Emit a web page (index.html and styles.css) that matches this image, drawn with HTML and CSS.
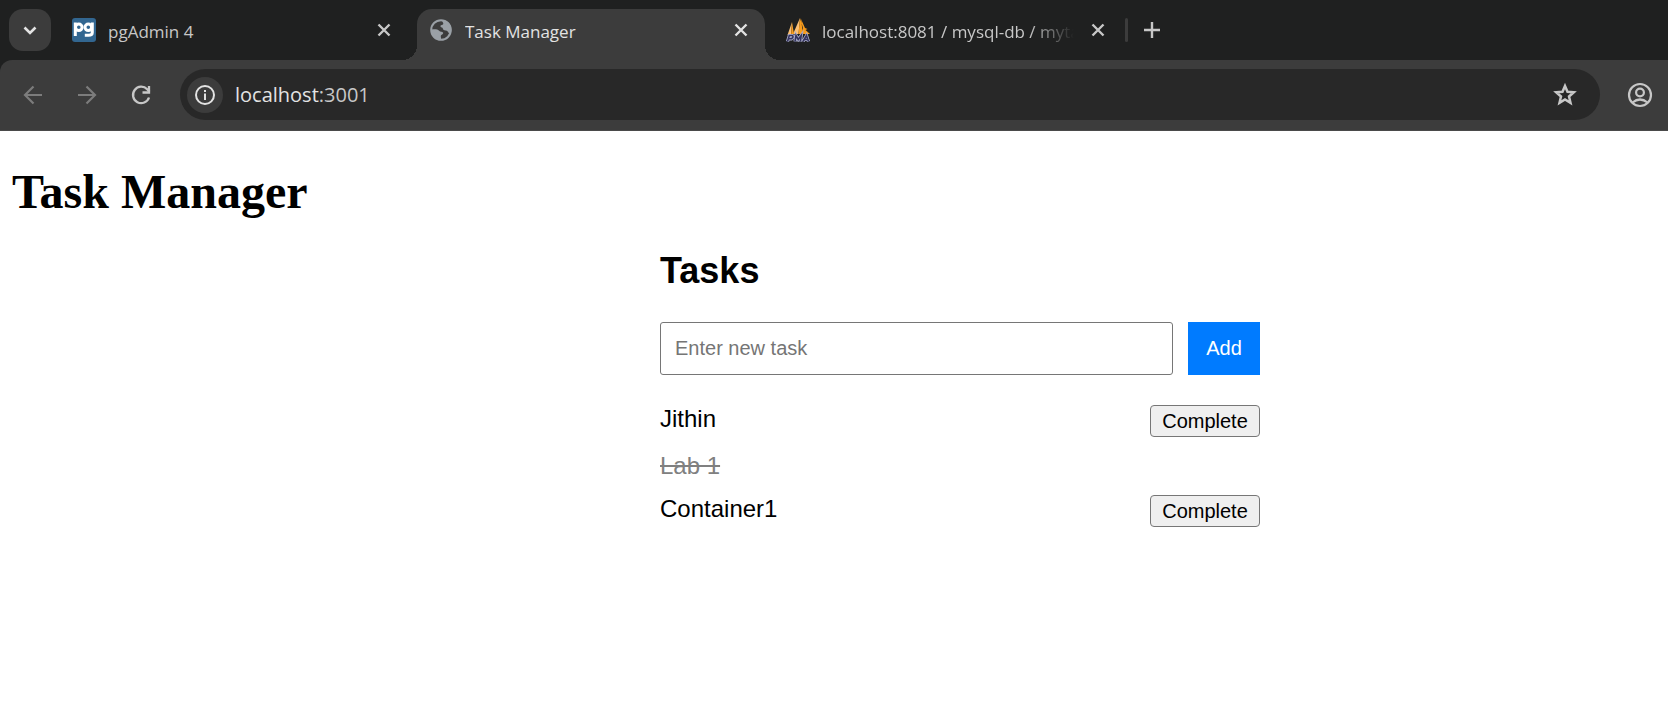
FILE: index.html
```html
<!DOCTYPE html>
<html lang="en">
<head>
<meta charset="utf-8">
<title>Task Manager</title>
<link rel="stylesheet" href="styles.css">
</head>
<body>
<header class="browser">
  <div class="tabstrip">
    <button class="tab-search" aria-label="Search tabs">
      <svg width="24" height="24" viewBox="0 0 24 24"><path d="M6.500 9.500l5.500 5.500L17.500 9.500" fill="none" stroke="currentColor" stroke-width="2.600"/></svg>
    </button>
    <div class="tab">
      <svg class="favicon" width="24" height="24" viewBox="0 0 24 24">
        <rect width="24" height="24" rx="3" fill="#326690"/>
        <g fill="none" stroke="#fff" stroke-width="3">
          <path d="M3.300 4.500v13.500"/><circle cx="6.800" cy="9.300" r="3.300"/>
          <circle cx="16.300" cy="9.300" r="3.300"/><path d="M20.300 4.500v10q0 2.800-3.800 2.800h-3.700"/>
        </g>
      </svg>
      <span class="tab-title">pgAdmin 4</span>
      <button class="close" aria-label="Close pgAdmin 4"><svg width="24" height="24" viewBox="0 0 24 24"><path d="M6.500 6.500l11 11M17.500 6.500l-11 11" stroke="currentColor" stroke-width="2.400"/></svg></button>
    </div>
    <div class="tab tab-active">
      <svg class="favicon" width="24" height="24" viewBox="0 0 24 24">
        <circle cx="12" cy="12" r="9.800" fill="#3c3c3c" stroke="#9aa0a6" stroke-width="2"/>
        <path d="M13.500 2c3.500.3 6.500 2.300 8 5.500 1 2.500 1 6 .2 8.200-1.700.1-2.300-1-3-2.200-.8-1.500-3.200-.4-4.300-1.700-.8-1-.2-2-1.700-2.300-1.300-.2-1.700-1.500-.7-2.200 1-.6 2.300-.2 2.300-1.800 0-1.300-1.500-1.700-.8-3.500zM2.300 11.500c3-.3 6.300-.5 7.800 1.300 1 1.300 3.500.4 4 2 .5 1.700-2 1.700-2.300 3.200-.1 1.300.6 2 .2 4C6 21.800 1.500 17.500 2.300 11.500z" fill="#9aa0a6"/>
      </svg>
      <span class="tab-title">Task Manager</span>
      <button class="close" aria-label="Close Task Manager"><svg width="24" height="24" viewBox="0 0 24 24"><path d="M6.500 6.500l11 11M17.500 6.500l-11 11" stroke="currentColor" stroke-width="2.400"/></svg></button>
    </div>
    <div class="tab">
      <svg class="favicon" width="24" height="24" viewBox="0 0 24 24">
        <path d="M6 4L1.500 17H5zM14 0L7 16h5.500z" fill="#fbc075"/>
        <path d="M6 4l-.8 12H8zM14 0l-1.500 16H16l1-6zM15 1l4 9 2.500 1-2 1 4.500 4h-7z" fill="#f89c1c"/>
        <g fill="none" stroke="#aeb0cf" stroke-width="3.200"><path d="M1.500 23.500l1.800-6h3q1.800 1.300-.8 3.300H3M9 23.500l1-6 2.200 4 3-4-.8 6M17 23.500l3.500-6 2 6M18 21.500h4"/></g>
        <g fill="none" stroke="#34345f" stroke-width="1.600"><path d="M1.500 23.500l1.800-6h3q1.800 1.300-.8 3.300H3M9 23.500l1-6 2.200 4 3-4-.8 6M17 23.500l3.500-6 2 6M18 21.500h4"/></g>
      </svg>
      <span class="tab-title tab-title-long">localhost:8081 / mysql-db / mytasks</span>
      <button class="close" aria-label="Close localhost:8081"><svg width="24" height="24" viewBox="0 0 24 24"><path d="M6.500 6.500l11 11M17.500 6.500l-11 11" stroke="currentColor" stroke-width="2.400"/></svg></button>
    </div>
    <span class="divider"></span>
    <button class="new-tab" aria-label="New tab"><svg width="24" height="24" viewBox="0 0 24 24"><path d="M12 4v16M4 12h16" stroke="currentColor" stroke-width="2.400"/></svg></button>
  </div>
  <div class="toolbar-wrap">
    <div class="toolbar">
      <button class="nav nav-off" aria-label="Back"><svg width="24" height="24" viewBox="0 0 24 24"><path d="M21 12H4.500M12.500 3.500L4 12l8.500 8.500" fill="none" stroke="currentColor" stroke-width="2.200"/></svg></button>
      <button class="nav nav-off" aria-label="Forward"><svg width="24" height="24" viewBox="0 0 24 24"><path d="M3 12h16.500M11.500 3.500L20 12l-8.500 8.500" fill="none" stroke="currentColor" stroke-width="2.200"/></svg></button>
      <button class="nav" aria-label="Reload"><svg width="24" height="24" viewBox="0 0 24 24"><path d="M20 14.500a8.200 8.200 0 1 1-1.800-8.200L20.500 8.700" fill="none" stroke="currentColor" stroke-width="2.300"/><path d="M20 3v6.500h-6.500" fill="none" stroke="currentColor" stroke-width="2.300"/></svg></button>
      <div class="address">
        <button class="site-info" aria-label="Site information"><svg width="22" height="22" viewBox="0 0 22 22"><circle cx="11" cy="11" r="9" fill="none" stroke="currentColor" stroke-width="2"/><path d="M11 9.500v6.500M11 6v2" stroke="currentColor" stroke-width="2"/></svg></button>
        <span class="url">localhost<span class="port">:3001</span></span>
        <button class="nav star" aria-label="Bookmark this tab"><svg width="26" height="26" viewBox="0 0 26 26"><path d="M13 4l2.500 5.800 6.300.5-4.800 4.200 1.500 6.300-5.500-3.300-5.500 3.300 1.500-6.300-4.800-4.200 6.300-.5z" fill="none" stroke="currentColor" stroke-width="2.500"/></svg></button>
      </div>
      <button class="nav profile" aria-label="Profile"><svg width="26" height="26" viewBox="0 0 26 26"><g fill="none" stroke="currentColor" stroke-width="2.200"><circle cx="13" cy="13" r="11"/><circle cx="13" cy="10.500" r="3.900"/><path d="M5.500 20.500q7.500-6 15 0"/></g></svg></button>
    </div>
  </div>
</header>
<main class="page">
  <h1 class="page-title">Task Manager</h1>
  <div class="tasks-area">
    <section class="tasks">
      <h2 class="tasks-title">Tasks</h2>
      <form class="task-form">
        <input class="task-input" type="text" placeholder="Enter new task" aria-label="New task">
        <button class="add" type="button">Add</button>
      </form>
      <ul class="task-list">
        <li class="task"><span>Jithin</span><button class="complete">Complete</button></li>
        <li class="task"><span class="done">Lab 1</span></li>
        <li class="task"><span>Container1</span><button class="complete">Complete</button></li>
      </ul>
    </section>
  </div>
</main>
</body>
</html>
```
FILE: styles.css
```css
* { box-sizing: border-box; }
body { margin: 0; background: #fff; color: #000; }
button { font: inherit; color: inherit; cursor: pointer; }
svg { display: block; flex: none; }

.browser {
  background: #1f2020;
  color: #c7c7c7;
  font-family: "Open Sans", "Noto Sans", sans-serif;
}
.browser button {
  display: flex;
  align-items: center;
  justify-content: center;
  flex: none;
  padding: 0;
  border: 0;
  background: none;
}
.tabstrip { display: flex; height: 60px; padding: 9px 9px 0; }
.browser .tab-search {
  width: 42px;
  height: 42px;
  margin-right: 9px;
  border-radius: 14px;
  background: #3c3c3c;
  color: #e3e3e3;
}
.tab {
  position: relative;
  display: flex;
  align-items: center;
  flex: 0 1 348px;
  min-width: 0;
  margin-right: 9px;
  padding: 0 12px 9px;
  font-size: 17px;
  line-height: 24px;
}
.tab:nth-of-type(3) { margin-right: 3px; }
.tab-active { background: #3c3c3c; color: #e3e3e3; border-radius: 15px 15px 0 0; }
.tab-active::before,
.tab-active::after {
  content: "";
  position: absolute;
  bottom: 0;
  width: 15px;
  height: 15px;
}
.tab-active::before { right: 100%; background: radial-gradient(circle at 0 0, transparent 15px, #3c3c3c 15px); }
.tab-active::after { left: 100%; background: radial-gradient(circle at 100% 0, transparent 15px, #3c3c3c 15px); }
.tab-title {
  flex: 1;
  min-width: 0;
  margin: 4px 12px 0;
  overflow: hidden;
  white-space: nowrap;
}
.tab-title-long { mask-image: linear-gradient(to right, #000 82%, transparent); }
.close { width: 24px; height: 24px; }
.divider { width: 3px; height: 24px; margin: 9px 11px 0 0; border-radius: 2px; background: #3c3c3c; }
.new-tab { width: 26px; height: 42px; }

.toolbar-wrap { background: #1f2020; }
.toolbar {
  display: flex;
  align-items: center;
  height: 71px;
  padding: 0 15px 1px 20px;
  border-bottom: 1px solid #4a4a4a;
  border-radius: 12px 0 0 0;
  background: #3c3c3c;
}
.nav { width: 26px; height: 42px; margin-right: 28px; }
.nav-off { color: #7c7c7c; }
.address {
  display: flex;
  align-items: center;
  flex: 1;
  height: 51px;
  margin: 0 27px 0 -2px;
  padding: 0 22px 0 7px;
  border-radius: 26px;
  background: #282828;
}
.browser .site-info { width: 36px; height: 36px; border-radius: 50%; background: #3c3c3c; color: #e3e3e3; }
.url { flex: 1; margin-left: 12px; color: #e3e3e3; font-size: 20px; line-height: 28px; }
.port { color: #c7c7c7; }
.star, .profile { margin: 0; }

.page { padding: 0 12px; }
.page-title {
  margin: 33px 0 31px;
  font: bold 48px/55px "Liberation Serif", "Times New Roman", serif;
}
.tasks-area { padding-left: 252px; }
.tasks {
  max-width: 600px;
  margin: 0 auto;
  font: 24px/28px "Liberation Sans", Arial, sans-serif;
}
.tasks-title { margin: 0 0 31px; font-size: 36px; line-height: 41px; }
.task-form { display: flex; gap: 15px; margin: 0 0 30px; }
.task-input {
  flex: 1;
  min-width: 0;
  height: 53px;
  padding: 0 14px;
  border: 1px solid #767676;
  border-radius: 3px;
  font: 20px/24px "Liberation Sans", Arial, sans-serif;
}
.task-input::placeholder { color: #757575; }
.add { width: 72px; padding: 0 0 2px; border: 0; background: #007bff; color: #fff; font-size: 20px; line-height: 24px; }
.task-list { display: grid; gap: 15px; margin: 0; padding: 0; list-style: none; }
.task { display: flex; justify-content: space-between; }
.done { color: gray; text-decoration: line-through; }
.complete {
  width: 110px;
  height: 32px;
  padding: 0;
  border: 1px solid #767676;
  border-radius: 4px;
  background: #efefef;
  font-size: 20px;
  line-height: 24px;
}
```
